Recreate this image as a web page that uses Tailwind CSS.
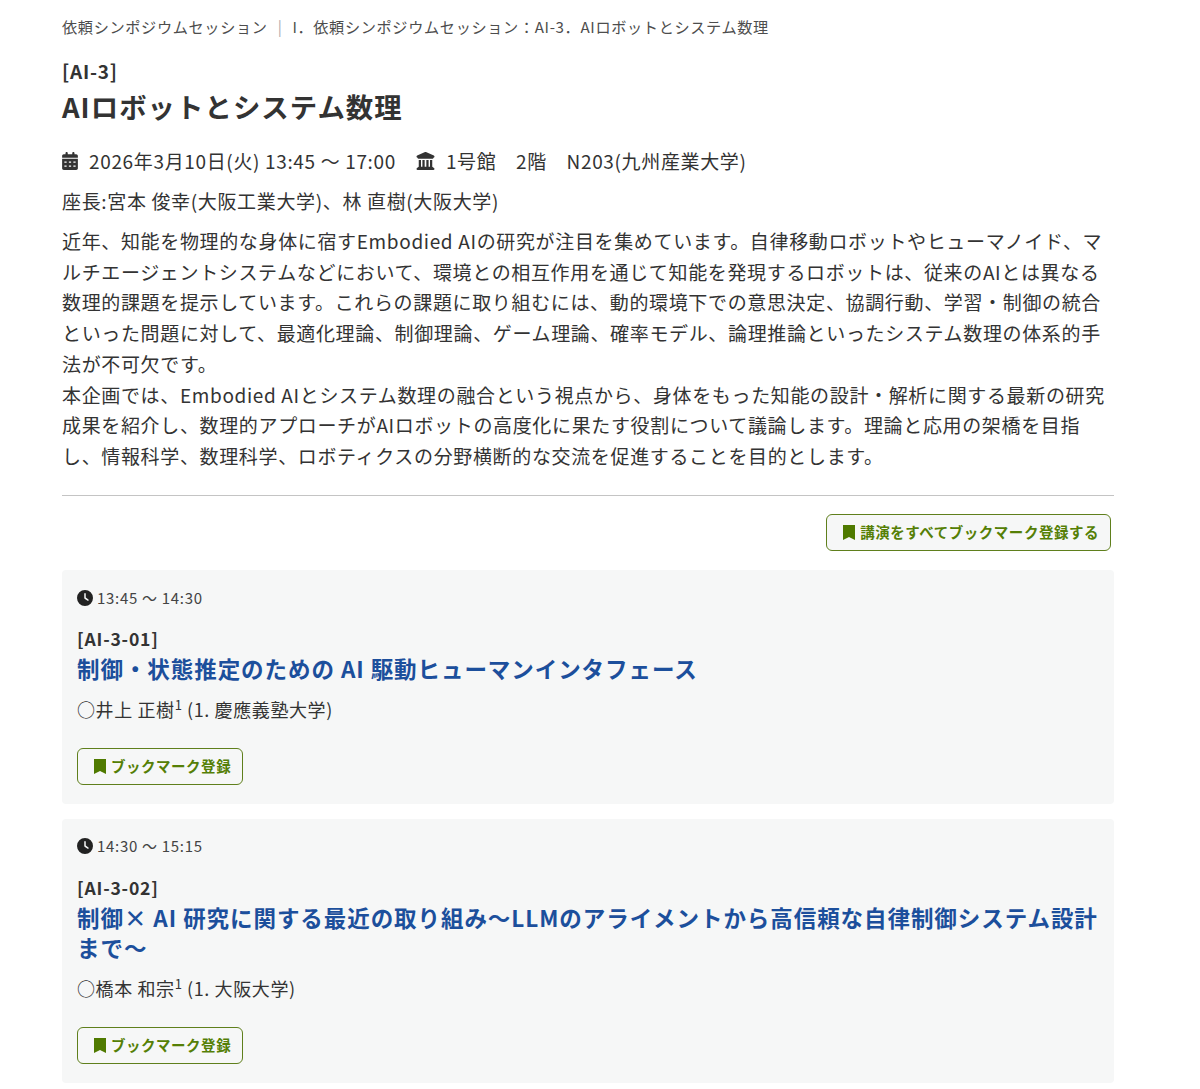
<!DOCTYPE html>
<html lang="ja">
<head>
    <meta charset="UTF-8">
    <meta name="viewport" content="width=device-width, initial-scale=1.0">
    <title>AIロボットとシステム数理</title>
    <script src="https://cdn.jsdelivr.net/npm/@tailwindcss/browser@4"></script>
</head>
<body class="bg-white text-[#333333] font-['Noto_Sans_CJK_JP','Noto_Sans',sans-serif] h-[1089px] overflow-hidden">
    <div class="pl-[62px] pr-[86px] pt-[15px]">
        <div class="text-[15.2px] leading-[22px] tracking-[0.63px] text-[#4d4d4d]">依頼シンポジウムセッション<span class="mx-[10px] text-[#aaaaaa]">|</span>I．依頼シンポジウムセッション：AI-3．AIロボットとシステム数理</div>

        <div class="mt-[22px] text-[19px] leading-[24px] tracking-[0.76px] font-bold">[AI-3]</div>
        <h1 class="mt-[3px] text-[27.4px] leading-[40px] tracking-[1.05px] font-bold">AIロボットとシステム数理</h1>

        <div class="mt-[20px] flex items-center text-[19px] leading-[30px] tracking-[0.65px]">
            <svg class="w-[16px] h-[18px] mr-[11px]" viewBox="0 0 448 512" fill="#333333"><path d="M128 0c17.700 0 32 14.300 32 32v32h128V32c0-17.700 14.300-32 32-32s32 14.300 32 32v32h48c26.500 0 48 21.500 48 48v48H0v-48c0-26.500 21.500-48 48-48h48V32c0-17.700 14.300-32 32-32zM0 192h448v272c0 26.500-21.500 48-48 48H48c-26.500 0-48-21.500-48-48V192zm64 80v32h64v-32H64zm128 0v32h64v-32h-64zm128 0v32h64v-32h-64zM64 384v32h64v-32H64zm128 0v32h64v-32h-64zm128 0v32h64v-32h-64z"/></svg>
            <span>2026年3月10日(火) 13:45 ～ 17:00</span>
            <svg class="w-[19px] h-[18px] ml-[20px] mr-[11px]" viewBox="0 0 512 512" fill="#333333"><path d="M243.400 2.600l-224 96c-14 6-21.800 21-18.700 35.800S16.800 160 32 160v8c0 13.300 10.700 24 24 24h400c13.300 0 24-10.700 24-24v-8c15.200 0 28.300-10.700 31.300-25.600s-4.800-29.900-18.700-35.800l-224-96c-8-3.400-17.200-3.400-25.200 0zM128 224H64v196.300c-.6.300-1.200.7-1.800 1.100l-48 32c-11.700 7.800-17 22.400-12.900 35.900S17.900 512 32 512h448c14.100 0 26.500-9.200 30.600-22.700s-1.100-28.100-12.900-35.900l-48-32c-.6-.4-1.200-.7-1.800-1.100V224h-64v192h-40V224h-64v192h-48V224h-64v192h-40V224z"/></svg>
            <span class="whitespace-pre">1号館　2階　N203(九州産業大学)</span>
        </div>

        <div class="mt-[10px] text-[19px] leading-[30px] tracking-[0.65px]">座長:宮本 俊幸(大阪工業大学)、林 直樹(大阪大学)</div>

        <p class="mt-[10px] text-[19px] leading-[30.7px] tracking-[0.65px]">近年、知能を物理的な身体に宿すEmbodied AIの研究が注目を集めています。自律移動ロボットやヒューマノイド、マルチエージェントシステムなどにおいて、環境との相互作用を通じて知能を発現するロボットは、従来のAIとは異なる数理的課題を提示しています。これらの課題に取り組むには、動的環境下での意思決定、協調行動、学習・制御の統合といった問題に対して、最適化理論、制御理論、ゲーム理論、確率モデル、論理推論といったシステム数理の体系的手法が不可欠です。<br>本企画では、Embodied AIとシステム数理の融合という視点から、身体をもった知能の設計・解析に関する最新の研究成果を紹介し、数理的アプローチがAIロボットの高度化に果たす役割について議論します。理論と応用の架橋を目指し、情報科学、数理科学、ロボティクスの分野横断的な交流を促進することを目的とします。</p>

        <hr class="mt-[23px] border-t border-[#c4c4c4]">

        <div class="mt-[18px] pr-[3px] flex justify-end">
            <button class="h-[37px] pl-[16px] pr-[11px] flex items-center gap-[5px] rounded-[6px] border border-[#5f7f1c] bg-[#f6f7f7] text-[#557f06] text-[14.5px] tracking-[0.52px] font-bold">
                <svg class="w-[12px] h-[15px]" viewBox="0 0 12 15" fill="#4f7a00"><path d="M0 0h12v15L6 12 0 15z"/></svg>
                講演をすべてブックマーク登録する
            </button>
        </div>

        <div class="mt-[19px] rounded-[4px] bg-[#f6f7f7] px-[15px] pt-[16px] pb-[19px]">
            <div class="flex items-center gap-[4px] text-[15px] leading-[24px] tracking-[0.7px] text-[#444444]">
                <svg class="w-[16px] h-[16px]" viewBox="0 0 512 512" fill="#222222"><path d="M256 0a256 256 0 1 1 0 512A256 256 0 1 1 256 0zm-24 120v136c0 8 4 15.500 10.700 20l96 64c11 7.400 25.900 4.400 33.300-6.700s4.400-25.900-6.700-33.300L280 243.200V120c0-13.300-10.700-24-24-24s-24 10.700-24 24z"/></svg>
                <span>13:45 ～ 14:30</span>
            </div>
            <div class="mt-[17px] text-[17.6px] leading-[24px] tracking-[0.8px] font-bold">[AI-3-01]</div>
            <div class="mt-[2px] text-[22.5px] leading-[30px] tracking-[0.94px] font-bold text-[#1c4f9c]">制御・状態推定のための AI 駆動ヒューマンインタフェース</div>
            <div class="mt-[11px] text-[18px] leading-[30px] tracking-[0.6px]">○井上 正樹<sup class="text-[13px]">1</sup> (1. 慶應義塾大学)</div>
            <button class="mt-[24px] h-[37px] pl-[16px] pr-[11px] flex items-center gap-[5px] rounded-[6px] border border-[#5f7f1c] bg-[#f6f7f7] text-[#557f06] text-[14.5px] tracking-[0.52px] font-bold">
                <svg class="w-[12px] h-[15px]" viewBox="0 0 12 15" fill="#4f7a00"><path d="M0 0h12v15L6 12 0 15z"/></svg>
                ブックマーク登録
            </button>
        </div>

        <div class="mt-[15px] rounded-[4px] bg-[#f6f7f7] px-[15px] pt-[15px] pb-[19px]">
            <div class="flex items-center gap-[4px] text-[15px] leading-[24px] tracking-[0.7px] text-[#444444]">
                <svg class="w-[16px] h-[16px]" viewBox="0 0 512 512" fill="#222222"><path d="M256 0a256 256 0 1 1 0 512A256 256 0 1 1 256 0zm-24 120v136c0 8 4 15.500 10.700 20l96 64c11 7.400 25.900 4.400 33.300-6.700s4.400-25.900-6.700-33.300L280 243.200V120c0-13.300-10.700-24-24-24s-24 10.700-24 24z"/></svg>
                <span>14:30 ～ 15:15</span>
            </div>
            <div class="mt-[18px] text-[17.6px] leading-[24px] tracking-[0.8px] font-bold">[AI-3-02]</div>
            <div class="mt-[2px] text-[22.5px] leading-[30px] tracking-[0.94px] font-bold text-[#1c4f9c]">制御× AI 研究に関する最近の取り組み～LLMのアライメントから高信頼な自律制御システム設計まで～</div>
            <div class="mt-[11px] text-[18px] leading-[30px] tracking-[0.6px]">○橋本 和宗<sup class="text-[13px]">1</sup> (1. 大阪大学)</div>
            <button class="mt-[24px] h-[37px] pl-[16px] pr-[11px] flex items-center gap-[5px] rounded-[6px] border border-[#5f7f1c] bg-[#f6f7f7] text-[#557f06] text-[14.5px] tracking-[0.52px] font-bold">
                <svg class="w-[12px] h-[15px]" viewBox="0 0 12 15" fill="#4f7a00"><path d="M0 0h12v15L6 12 0 15z"/></svg>
                ブックマーク登録
            </button>
        </div>
    </div>
</body>
</html>
